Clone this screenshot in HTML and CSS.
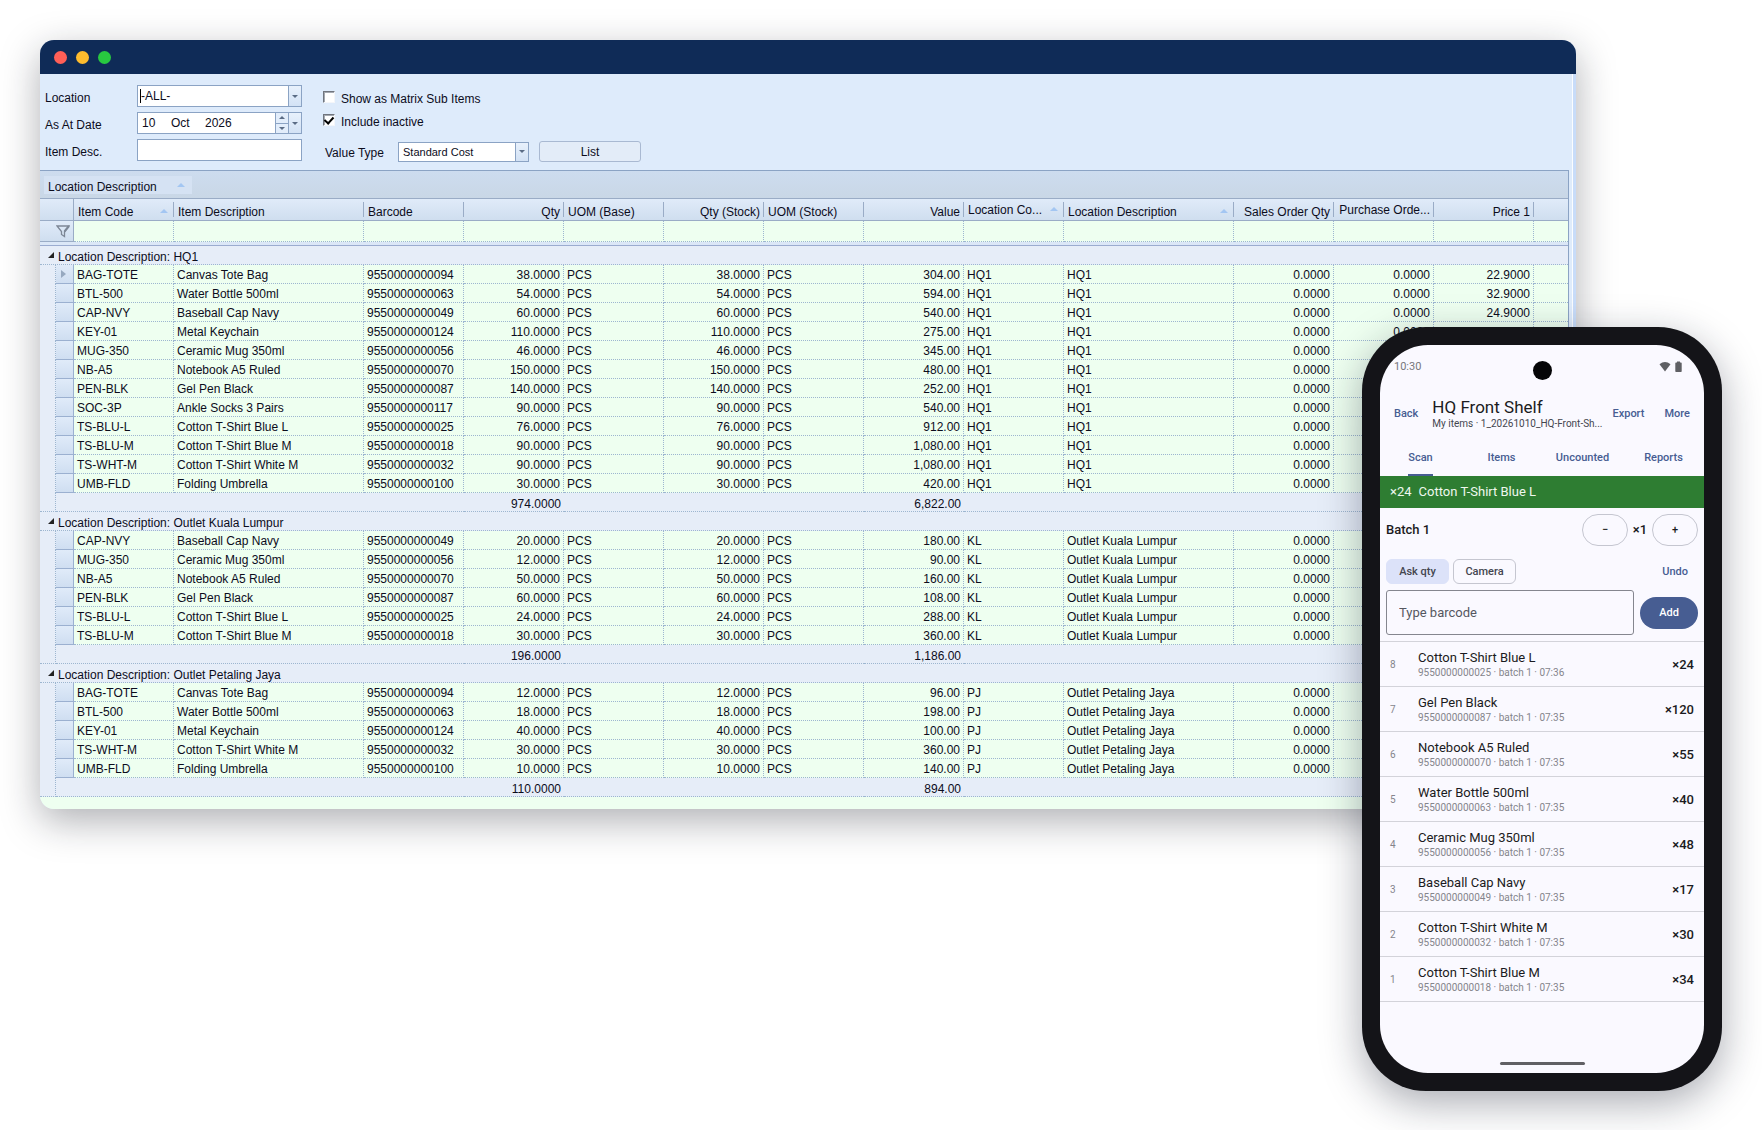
FILE: index.html
```html
<!DOCTYPE html>
<html lang="en">
<head>
<meta charset="utf-8">
<title>Stock balance and counting app</title>
<link rel="stylesheet" href="styles.css">
</head>
<body>
<main class="stage">
<section class="window">
  <header class="titlebar"><span class="dot red"></span><span class="dot amber"></span><span class="dot green"></span></header>
  <div class="window-body">
    <form class="filters">
      <div class="fields">
        <label for="loc">Location</label>
        <div class="combo"><span class="caret"></span><input id="loc" type="text" value="-ALL-"><button type="button" class="drop" aria-label="Open"></button></div>
        <label for="day">As At Date</label>
        <div class="combo date"><input id="day" type="text" value="10"><input type="text" value="Oct" aria-label="Month"><input type="text" value="2026" aria-label="Year"><span class="spin"><button type="button" class="up" aria-label="Up"></button><button type="button" class="down" aria-label="Down"></button></span><button type="button" class="drop" aria-label="Open"></button></div>
        <label for="desc">Item Desc.</label>
        <div class="combo"><input id="desc" type="text"></div>
      </div>
      <div class="options">
        <label class="check"><input type="checkbox">Show as Matrix Sub Items</label>
        <label class="check"><input type="checkbox" checked>Include inactive</label>
        <div class="value-row">
          <label for="vt">Value Type</label>
          <div class="select"><select id="vt"><option>Standard Cost</option></select><span class="drop"></span></div>
          <button type="button" class="list">List</button>
        </div>
      </div>
    </form>
    <div class="grid">
      <div class="group-panel"><button type="button" class="group-chip">Location Description<i class="sort"></i></button></div>
      <table>
        <colgroup><col class="c-indent"><col class="c-mark"><col class="c-std"><col class="c-desc"><col class="c-std"><col class="c-std"><col class="c-std"><col class="c-std"><col class="c-std"><col class="c-std"><col class="c-std"><col class="c-loc"><col class="c-std"><col class="c-std"><col class="c-std"><col></colgroup>
        <thead>
          <tr class="head"><th colspan="2" class="corner"></th><th>Item Code<i class="sort"></i></th><th>Item Description</th><th>Barcode</th><th class="n">Qty</th><th>UOM (Base)</th><th class="n">Qty (Stock)</th><th>UOM (Stock)</th><th class="n">Value</th><th class="cut">Location Co...<i class="sort"></i></th><th>Location Description<i class="sort"></i></th><th class="n">Sales Order Qty</th><th class="n cut">Purchase Orde...</th><th class="n">Price 1</th><th class="rest"></th></tr>
          <tr class="filter"><td colspan="2" class="corner"><svg width="14" height="13" viewBox="0 0 14 13"><path d="M1 1h12L8.500 6.500V11.500L5.500 9.500V6.500Z" fill="none" stroke="#7d8796" stroke-width="1.300"/><path d="M8.500 6.500 13 1" stroke="#7d8796" stroke-width="2"/></svg></td><td></td><td></td><td></td><td></td><td></td><td></td><td></td><td></td><td></td><td></td><td></td><td></td><td></td><td class="rest"></td></tr>
          <tr class="band"><td colspan="16"></td></tr>
        </thead>
        <tbody>
          <tr class="group"><td colspan="16"><i class="fold"></i>Location Description: HQ1</td></tr>
          <tr><td><td><i class="current"></i><td>BAG-TOTE<td>Canvas Tote Bag<td>9550000000094<td>38.0000<td>PCS<td>38.0000<td>PCS<td>304.00<td>HQ1<td>HQ1<td>0.0000<td>0.0000<td>22.9000<td></tr>
          <tr><td><td><td>BTL-500<td>Water Bottle 500ml<td>9550000000063<td>54.0000<td>PCS<td>54.0000<td>PCS<td>594.00<td>HQ1<td>HQ1<td>0.0000<td>0.0000<td>32.9000<td></tr>
          <tr><td><td><td>CAP-NVY<td>Baseball Cap Navy<td>9550000000049<td>60.0000<td>PCS<td>60.0000<td>PCS<td>540.00<td>HQ1<td>HQ1<td>0.0000<td>0.0000<td>24.9000<td></tr>
          <tr><td><td><td>KEY-01<td>Metal Keychain<td>9550000000124<td>110.0000<td>PCS<td>110.0000<td>PCS<td>275.00<td>HQ1<td>HQ1<td>0.0000<td>0.0000<td><td></tr>
          <tr><td><td><td>MUG-350<td>Ceramic Mug 350ml<td>9550000000056<td>46.0000<td>PCS<td>46.0000<td>PCS<td>345.00<td>HQ1<td>HQ1<td>0.0000<td><td><td></tr>
          <tr><td><td><td>NB-A5<td>Notebook A5 Ruled<td>9550000000070<td>150.0000<td>PCS<td>150.0000<td>PCS<td>480.00<td>HQ1<td>HQ1<td>0.0000<td><td><td></tr>
          <tr><td><td><td>PEN-BLK<td>Gel Pen Black<td>9550000000087<td>140.0000<td>PCS<td>140.0000<td>PCS<td>252.00<td>HQ1<td>HQ1<td>0.0000<td><td><td></tr>
          <tr><td><td><td>SOC-3P<td>Ankle Socks 3 Pairs<td>9550000000117<td>90.0000<td>PCS<td>90.0000<td>PCS<td>540.00<td>HQ1<td>HQ1<td>0.0000<td><td><td></tr>
          <tr><td><td><td>TS-BLU-L<td>Cotton T-Shirt Blue L<td>9550000000025<td>76.0000<td>PCS<td>76.0000<td>PCS<td>912.00<td>HQ1<td>HQ1<td>0.0000<td><td><td></tr>
          <tr><td><td><td>TS-BLU-M<td>Cotton T-Shirt Blue M<td>9550000000018<td>90.0000<td>PCS<td>90.0000<td>PCS<td>1,080.00<td>HQ1<td>HQ1<td>0.0000<td><td><td></tr>
          <tr><td><td><td>TS-WHT-M<td>Cotton T-Shirt White M<td>9550000000032<td>90.0000<td>PCS<td>90.0000<td>PCS<td>1,080.00<td>HQ1<td>HQ1<td>0.0000<td><td><td></tr>
          <tr><td><td><td>UMB-FLD<td>Folding Umbrella<td>9550000000100<td>30.0000<td>PCS<td>30.0000<td>PCS<td>420.00<td>HQ1<td>HQ1<td>0.0000<td><td><td></tr>
          <tr class="sum"><td><td colspan="4"><td>974.0000<td colspan="3"><td>6,822.00<td colspan="6"></tr>
        </tbody>
        <tbody>
          <tr class="group"><td colspan="16"><i class="fold"></i>Location Description: Outlet Kuala Lumpur</td></tr>
          <tr><td><td><td>CAP-NVY<td>Baseball Cap Navy<td>9550000000049<td>20.0000<td>PCS<td>20.0000<td>PCS<td>180.00<td>KL<td>Outlet Kuala Lumpur<td>0.0000<td><td><td></tr>
          <tr><td><td><td>MUG-350<td>Ceramic Mug 350ml<td>9550000000056<td>12.0000<td>PCS<td>12.0000<td>PCS<td>90.00<td>KL<td>Outlet Kuala Lumpur<td>0.0000<td><td><td></tr>
          <tr><td><td><td>NB-A5<td>Notebook A5 Ruled<td>9550000000070<td>50.0000<td>PCS<td>50.0000<td>PCS<td>160.00<td>KL<td>Outlet Kuala Lumpur<td>0.0000<td><td><td></tr>
          <tr><td><td><td>PEN-BLK<td>Gel Pen Black<td>9550000000087<td>60.0000<td>PCS<td>60.0000<td>PCS<td>108.00<td>KL<td>Outlet Kuala Lumpur<td>0.0000<td><td><td></tr>
          <tr><td><td><td>TS-BLU-L<td>Cotton T-Shirt Blue L<td>9550000000025<td>24.0000<td>PCS<td>24.0000<td>PCS<td>288.00<td>KL<td>Outlet Kuala Lumpur<td>0.0000<td><td><td></tr>
          <tr><td><td><td>TS-BLU-M<td>Cotton T-Shirt Blue M<td>9550000000018<td>30.0000<td>PCS<td>30.0000<td>PCS<td>360.00<td>KL<td>Outlet Kuala Lumpur<td>0.0000<td><td><td></tr>
          <tr class="sum"><td><td colspan="4"><td>196.0000<td colspan="3"><td>1,186.00<td colspan="6"></tr>
        </tbody>
        <tbody>
          <tr class="group"><td colspan="16"><i class="fold"></i>Location Description: Outlet Petaling Jaya</td></tr>
          <tr><td><td><td>BAG-TOTE<td>Canvas Tote Bag<td>9550000000094<td>12.0000<td>PCS<td>12.0000<td>PCS<td>96.00<td>PJ<td>Outlet Petaling Jaya<td>0.0000<td><td><td></tr>
          <tr><td><td><td>BTL-500<td>Water Bottle 500ml<td>9550000000063<td>18.0000<td>PCS<td>18.0000<td>PCS<td>198.00<td>PJ<td>Outlet Petaling Jaya<td>0.0000<td><td><td></tr>
          <tr><td><td><td>KEY-01<td>Metal Keychain<td>9550000000124<td>40.0000<td>PCS<td>40.0000<td>PCS<td>100.00<td>PJ<td>Outlet Petaling Jaya<td>0.0000<td><td><td></tr>
          <tr><td><td><td>TS-WHT-M<td>Cotton T-Shirt White M<td>9550000000032<td>30.0000<td>PCS<td>30.0000<td>PCS<td>360.00<td>PJ<td>Outlet Petaling Jaya<td>0.0000<td><td><td></tr>
          <tr><td><td><td>UMB-FLD<td>Folding Umbrella<td>9550000000100<td>10.0000<td>PCS<td>10.0000<td>PCS<td>140.00<td>PJ<td>Outlet Petaling Jaya<td>0.0000<td><td><td></tr>
          <tr class="sum"><td><td colspan="4"><td>110.0000<td colspan="3"><td>894.00<td colspan="6"></tr>
        </tbody>
      </table>
    </div>
  </div>
</section>

<section class="phone">
  <div class="screen">
    <span class="camera"></span>
    <div class="status"><span>10:30</span>
      <svg width="24" height="12" viewBox="0 0 24 12" fill="#5f6064"><path d="M0.500 3.200Q6 -1 11.500 3.200L6 10.500Z"/><path d="M18 1.500V.500h3v1h1q.700 0 .700.700v8.100q0 .700-.7.700h-5q-.7 0-.7-.7V2.200q0-.7.700-.700z"/></svg>
    </div>
    <header class="appbar">
      <button type="button" class="link">Back</button>
      <div class="heading"><h1>HQ Front Shelf</h1><p>My items · 1_20261010_HQ-Front-Sh...</p></div>
      <button type="button" class="link">Export</button>
      <button type="button" class="link">More</button>
    </header>
    <nav class="tabs"><a href="#scan" class="on">Scan</a><a href="#items">Items</a><a href="#uncounted">Uncounted</a><a href="#reports">Reports</a></nav>
    <div class="banner"><span>×24</span><span>Cotton T-Shirt Blue L</span></div>
    <div class="batch"><strong>Batch 1</strong><button type="button" class="step">−</button><b>×1</b><button type="button" class="step">+</button></div>
    <div class="chips"><button type="button" class="chip sel">Ask qty</button><button type="button" class="chip">Camera</button><button type="button" class="link undo">Undo</button></div>
    <div class="entry"><input type="text" placeholder="Type barcode" aria-label="Type barcode"><button type="button" class="add">Add</button></div>
    <ul class="scans">
      <li><span class="no">8</span><div><h2>Cotton T-Shirt Blue L</h2><p>9550000000025 · batch 1 · 07:36</p></div><b>×24</b></li>
      <li><span class="no">7</span><div><h2>Gel Pen Black</h2><p>9550000000087 · batch 1 · 07:35</p></div><b>×120</b></li>
      <li><span class="no">6</span><div><h2>Notebook A5 Ruled</h2><p>9550000000070 · batch 1 · 07:35</p></div><b>×55</b></li>
      <li><span class="no">5</span><div><h2>Water Bottle 500ml</h2><p>9550000000063 · batch 1 · 07:35</p></div><b>×40</b></li>
      <li><span class="no">4</span><div><h2>Ceramic Mug 350ml</h2><p>9550000000056 · batch 1 · 07:35</p></div><b>×48</b></li>
      <li><span class="no">3</span><div><h2>Baseball Cap Navy</h2><p>9550000000049 · batch 1 · 07:35</p></div><b>×17</b></li>
      <li><span class="no">2</span><div><h2>Cotton T-Shirt White M</h2><p>9550000000032 · batch 1 · 07:35</p></div><b>×30</b></li>
      <li><span class="no">1</span><div><h2>Cotton T-Shirt Blue M</h2><p>9550000000018 · batch 1 · 07:35</p></div><b>×34</b></li>
    </ul>
    <div class="home"></div>
  </div>
</section>
</main>
</body>
</html>
```
FILE: styles.css
```css
* { box-sizing: border-box; }
body { margin: 0; background: #fff; }
button, input, select { font: inherit; color: inherit; margin: 0; padding: 0; border: 0; background: none; outline: 0; }
h1, h2, p, ul { margin: 0; padding: 0; font-weight: 400; }

.stage { display: grid; align-items: start; padding: 40px; }
.window, .phone { grid-area: 1 / 1; }

/* Desktop window */
.window { margin-right: 146px; border-radius: 14px; overflow: hidden; background: #deebfb; box-shadow: 0 12px 38px rgba(20, 24, 36, .34); font: 12px/14px "Liberation Sans", Arial, sans-serif; color: #0c0c1c; }
.titlebar { display: flex; align-items: center; gap: 9px; height: 34px; padding-left: 14px; background: #0f2b57; }
.dot { width: 13px; height: 13px; border-radius: 50%; }
.red { background: #ff5f57; }
.amber { background: #febc2e; }
.green { background: #28c840; }
.window-body { padding-right: 4px; border-right: 3px solid #c8dcf9; box-shadow: inset -1px 0 #fbfdff; }

.filters { display: flex; gap: 21px; height: 96px; padding: 11px 0 0 5px; }
.fields { display: grid; grid-template-columns: 92px 165px; grid-auto-rows: 22px; row-gap: 5px; align-items: center; }
.fields label { padding-top: 4px; }
.combo, .select { display: flex; align-items: stretch; height: 22px; background: #fff; border: 1px solid #8ba3c4; }
.combo input { flex: 1; min-width: 0; width: 100%; }
.caret { width: 1px; margin: 3px 0 3px 2px; background: #000; }
.date input:nth-child(1) { flex: 0 0 33px; padding-left: 4px; }
.date input:nth-child(2) { flex: 0 0 34px; }
.date input:nth-child(3) { flex: 1; }
.drop { flex: 0 0 13px; display: grid; place-items: center; background: linear-gradient(#e8f1fc, #d3e2f5); border-left: 1px solid #8ba3c4; }
.drop::after, .down::after { content: ""; border: 3px solid transparent; border-top-color: #5b6c85; border-bottom: 0; }
.spin { display: flex; flex-direction: column; flex: 0 0 13px; border-left: 1px solid #8ba3c4; background: #e2edfb; }
.spin button { flex: 1; display: grid; place-items: center; }
.up::after { content: ""; border: 3px solid transparent; border-bottom-color: #5b6c85; border-top: 0; }
.spin .down { border-top: 1px solid #8ba3c4; }
.check { display: flex; align-items: center; gap: 6px; height: 23px; }
.check input { appearance: none; display: grid; place-items: center; width: 12px; height: 12px; margin-bottom: 3px; background: #fff; border: 1px solid #f4f6fa; border-top-color: #70757e; border-left-color: #70757e; box-shadow: inset 1px 1px #a4a9b1; }
.check input:checked::after { content: ""; width: 4px; height: 7px; border: solid #000; border-width: 0 2px 2px 0; transform: rotate(42deg); margin-top: -2px; }
.options { padding-top: 2px; }
.value-row { display: flex; align-items: center; margin-top: 8px; }
.value-row label { width: 75px; padding: 2px 0 0 2px; }
.select { width: 131px; height: 20px; margin-right: 10px; }
.select select { flex: 1; appearance: none; padding-left: 4px; font-size: 11px; }
.list { width: 102px; height: 21px; background: #e3ecf8; border: 1px solid #a9b9d2; border-radius: 3px; }

.grid { border: solid #8ba3c4; border-width: 1px 1px 0 0; background: #eefff0; padding-bottom: 12px; }
.group-panel { height: 28px; padding: 5px 4px; background: linear-gradient(#cddcef, #c9d7e6); border-bottom: 1px solid #9aacc6; }
.group-chip { display: flex; align-items: center; justify-content: space-between; width: 148px; height: 18px; padding: 4px 7px 0 4px; background: #d5e2f3; }
.sort { border: 4px solid transparent; border-top: 0; border-bottom-color: #a3c6f2; margin-bottom: 5px; }

table { width: 100%; table-layout: fixed; border-spacing: 0; }
.c-indent { width: 16px; }
.c-mark { width: 18px; }
.c-std { width: 100px; }
.c-desc { width: 190px; }
.c-loc { width: 170px; }
th, td { padding: 0 3px; text-align: left; font-weight: 400; white-space: nowrap; }
.head th { height: 22px; padding: 4px 4px 0; border-bottom: 1px solid #9aacc6; background: linear-gradient(#9aacc6, #9aacc6) right 3px / 1px 15px no-repeat, linear-gradient(#e0ebf9, #cfdeef); }
.head .n { text-align: right; }
.head .cut { padding-top: 0; }
.head .sort { float: right; margin: 4px 2px 0 0; }
.head .rest { background: linear-gradient(#e0ebf9, #cfdeef); }
.head .corner, .filter .corner { border-right: 1px solid #9aacc6; background: linear-gradient(#e0ebf9, #cfdeef); }
.filter td { height: 21px; border-right: 1px dotted #9db6d0; border-bottom: 1px dotted #9db6d0; background: #eefff0; }
.filter .corner { border-right-style: solid; border-bottom: 1px solid #9aacc6; text-align: right; }
.filter svg { display: block; margin-left: auto; }
.filter .rest { border-right: 0; }
.band td { height: 4px; padding: 0; background: #dbe7f7; border-bottom: 1px solid #9bacd0; }

tbody td { height: 19px; padding-top: 2px; border-right: 1px dotted #9db6d0; border-bottom: 1px dotted #9db6d0; background: #eefff0; }
tbody td:last-child { border-right: 0; }
tbody td:first-child { padding: 0; background: #e6edf8; border-bottom: 0; }
tbody td:nth-child(2) { padding: 0; border: solid #9bb0d0; border-width: 0 1px 1px 0; background: linear-gradient(#e0ebf9, #cfdef1); }
tbody td:nth-child(6), tbody td:nth-child(8), tbody td:nth-child(10), tbody td:nth-child(13), tbody td:nth-child(14), tbody td:nth-child(15) { text-align: right; }
tbody .group td:first-child { padding: 3px 0 0 8px; border-bottom: 1px dotted #9db6d0; border-right: 0; }
tbody .sum td { padding-top: 3px; text-align: right; background: #e6edf8; border: 0; border-bottom: 1px dotted #9db6d0; }
tbody .sum td:first-child { border-right: 1px dotted #9db6d0; }
.fold { display: inline-block; margin: 0 4px 3px 0; border: 3px solid #222; border-top-color: transparent; border-left-color: transparent; }
.current { display: block; margin-left: 5px; width: 0; border: 4px solid transparent; border-left: 5px solid #97a9c0; border-right: 0; }

/* Handset */
.phone { justify-self: end; z-index: 1; width: 360px; margin-top: 287px; padding: 18px; border-radius: 64px; background: #141418; box-shadow: 0 12px 40px rgba(20, 24, 44, .36); font: 500 11px/14px Roboto, sans-serif; color: #1b1b21; }
.screen { position: relative; border-radius: 48px; overflow: hidden; background: #faf9ff; }
.camera { position: absolute; top: 16px; left: 50%; margin-left: -9px; width: 19px; height: 19px; border-radius: 50%; background: #050507; }
.status { display: flex; align-items: center; justify-content: space-between; height: 44px; padding: 0 21px 1px 14px; font-weight: 400; color: #77777c; }
.link { color: #475d92; }
.appbar { display: flex; align-items: center; height: 48px; padding: 1px 14px 0; }
.appbar .link + .link { margin-left: 20px; }
.heading { flex: 1; margin-left: 14px; }
h1 { font-size: 17px; line-height: 20px; }
.heading p { font-size: 10px; font-weight: 400; line-height: 14px; color: #44464f; }
.tabs { display: grid; grid-template-columns: repeat(4, 1fr); justify-items: center; height: 39px; }
.tabs a { display: flex; align-items: center; padding-top: 4px; color: #475d92; text-decoration: none; border-bottom: 2px solid transparent; }
.tabs .on { border-color: #475d92; }
.banner { display: flex; align-items: center; gap: 7px; height: 32px; padding: 0 10px; background: #2e7d32; color: #eef8ee; font-size: 13px; font-weight: 400; }
.batch { display: flex; align-items: center; height: 44px; padding: 0 6px; }
.batch strong { flex: 1; font-size: 13px; font-weight: 500; }
.batch b { width: 24px; text-align: center; font-size: 13px; font-weight: 500; }
.step { width: 46px; height: 32px; border: 1px solid #c5c6d0; border-radius: 16px; }
.chips { display: flex; gap: 4px; align-items: center; padding: 7px 6px 6px; }
.chip { width: 63px; height: 25px; border: 1px solid #c5c6d0; border-radius: 6px; color: #44464f; }
.chip.sel { background: #dce2f9; border-color: #dce2f9; }
.undo { margin: 0 10px 0 auto; }
.entry { display: flex; align-items: center; gap: 6px; padding: 0 6px 6px; border-bottom: 1px solid #d3d3da; }
.entry input { flex: 1; min-width: 0; height: 45px; padding: 0 12px; border: 1px solid #85868f; border-radius: 3px; font-size: 13px; font-weight: 400; }
.entry input::placeholder { color: #55575f; opacity: 1; }
.add { width: 58px; height: 32px; border-radius: 16px; background: #475d92; color: #fff; }
.scans { list-style: none; }
.scans li { display: flex; align-items: center; height: 45px; padding: 1px 10px 0; border-bottom: 1px solid #d3d3da; }
.scans div { flex: 1; }
.no { width: 28px; font-size: 10px; font-weight: 400; color: #85858c; }
h2 { font-size: 13px; line-height: 16px; }
.scans p { font-size: 10px; line-height: 14px; color: #85858c; }
.scans b { font-size: 13px; font-weight: 500; }
.home { width: 85px; height: 3px; margin: 60px auto 8px; border-radius: 2px; background: #606064; }
```
